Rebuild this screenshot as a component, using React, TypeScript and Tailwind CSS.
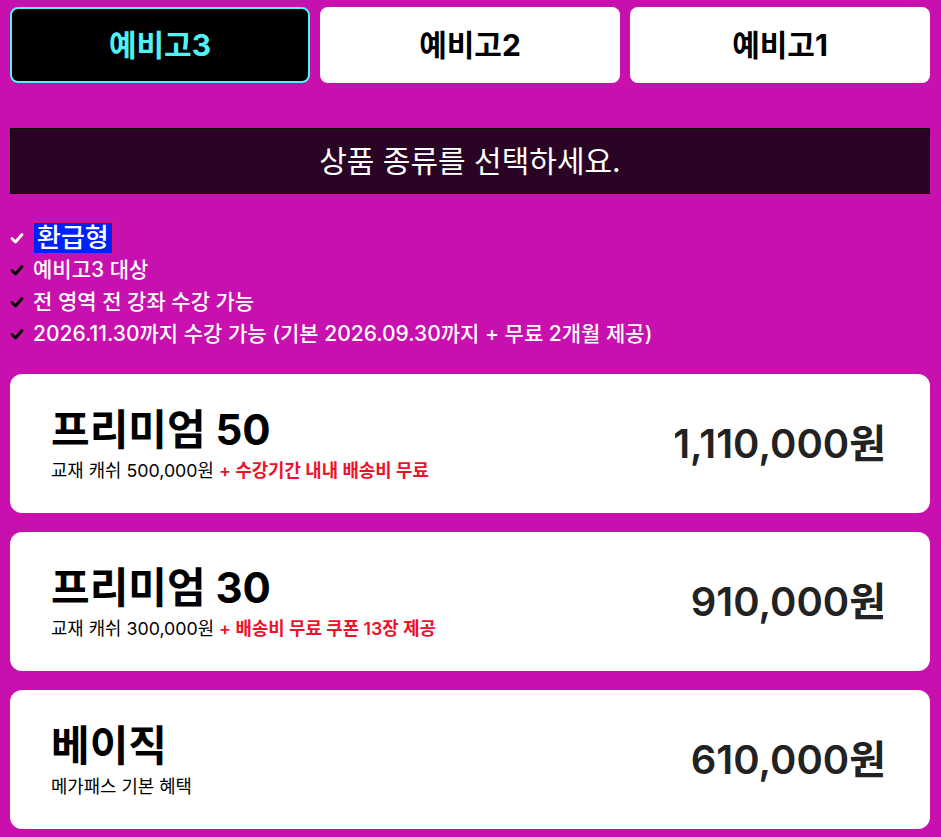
import React from "react";

const font = { fontFamily: 'Inter, "Noto Sans CJK KR", sans-serif' };

function Check({ white }: { white?: boolean }) {
  return (
    <svg width="14" height="12" viewBox="0 0 14 12" className="shrink-0">
      <path d="M2 6.5 L5.5 10 L12 2.5" fill="none" stroke={white ? "#ffffff" : "#000000"} strokeWidth="2.8" strokeLinecap="round" strokeLinejoin="round" />
    </svg>
  );
}

const plans = [
  { name: "프리미엄 50", sub: "교재 캐쉬 500,000원", extra: "+ 수강기간 내내 배송비 무료", price: "1,110,000원" },
  { name: "프리미엄 30", sub: "교재 캐쉬 300,000원", extra: "+ 배송비 무료 쿠폰 13장 제공", price: "910,000원" },
  { name: "베이직", sub: "메가패스 기본 혜택", extra: "", price: "610,000원" },
];

export default function App() {
  return (
    <div className="w-[941px] h-[837px] bg-[#c710ad] pl-[10px] pr-[11px] pt-[7px]" style={font}>
      <div className="grid grid-cols-3 gap-[10px]">
        <div className="h-[76px] rounded-[8px] bg-black border-2 border-[#4ff2f5] flex items-center justify-center text-[30px] font-bold text-[#4ff2f5]">예비고3</div>
        <div className="h-[76px] rounded-[8px] bg-white flex items-center justify-center text-[30px] font-bold text-black">예비고2</div>
        <div className="h-[76px] rounded-[8px] bg-white flex items-center justify-center text-[30px] font-bold text-black">예비고1</div>
      </div>

      <div className="mt-[45px] h-[66px] bg-[#290424] border border-black flex items-center justify-center text-[30px] text-white">
        상품 종류를 선택하세요.
      </div>

      <div className="mt-[28px] flex flex-col text-white text-[21px] font-medium">
        <div className="flex items-center gap-[9px] h-[32px]">
          <Check white />
          <span className="bg-[#0020ff] border border-[#e0107a] px-[3px] text-[26px] leading-[30px]">환급형</span>
        </div>
        <div className="flex items-center gap-[9px] h-[32px]"><Check /><span>예비고3 대상</span></div>
        <div className="flex items-center gap-[9px] h-[32px]"><Check /><span>전 영역 전 강좌 수강 가능</span></div>
        <div className="flex items-center gap-[9px] h-[32px]"><Check /><span>2026.11.30까지 수강 가능 (기본 2026.09.30까지 + 무료 2개월 제공)</span></div>
      </div>

      <div className="mt-[24px] flex flex-col gap-[19px]">
        {plans.map((p) => (
          <div key={p.name} className="h-[139px] bg-white rounded-[12px] flex items-center justify-between pl-[41px] pr-[44px]">
            <div className="flex flex-col">
              <div className="text-[42px] font-bold text-black leading-[48px]">{p.name}</div>
              <div className="text-[17.8px] text-black mt-[6px] leading-[22px]">
                {p.sub} {p.extra && <span className="text-[#f0102a] font-semibold">{p.extra}</span>}
              </div>
            </div>
            <div className="text-[40px] font-semibold text-[#222222]">{p.price}</div>
          </div>
        ))}
      </div>
    </div>
  );
}
